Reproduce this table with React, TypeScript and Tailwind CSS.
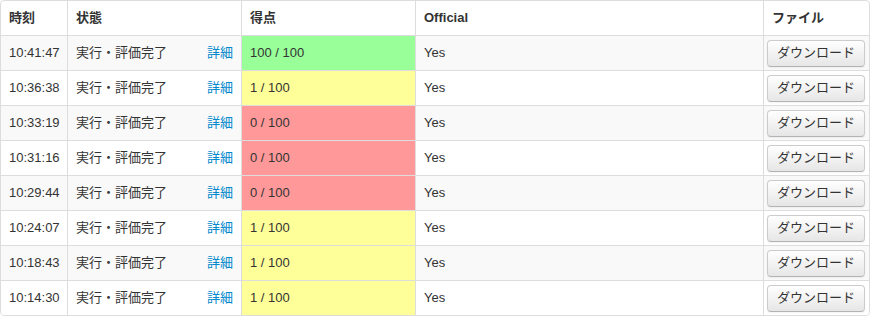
import React from 'react';

type Submission = {
  time: string;
  score: number;
  official: string;
};

const submissions: Submission[] = [
  { time: '10:41:47', score: 100, official: 'Yes' },
  { time: '10:36:38', score: 1, official: 'Yes' },
  { time: '10:33:19', score: 0, official: 'Yes' },
  { time: '10:31:16', score: 0, official: 'Yes' },
  { time: '10:29:44', score: 0, official: 'Yes' },
  { time: '10:24:07', score: 1, official: 'Yes' },
  { time: '10:18:43', score: 1, official: 'Yes' },
  { time: '10:14:30', score: 1, official: 'Yes' },
];

const scoreClass = (score: number) => {
  if (score === 100) return 'bg-[#99ff99]';
  if (score === 0) return 'bg-[#ff9999]';
  return 'bg-[#ffff99]';
};

const font = { fontFamily: '"Liberation Sans", "Noto Sans CJK JP", sans-serif' };

const App: React.FC = () => {
  return (
    <div className="w-[870px] bg-white text-[13px] leading-[18px] text-[#333]" style={font}>
      <div className="border border-[#dddddd] rounded-[4px] overflow-hidden">
        <table className="w-[868px] table-fixed border-separate border-spacing-0">
          <colgroup>
            <col className="w-[66px]" />
            <col className="w-[174px]" />
            <col className="w-[174px]" />
            <col className="w-[348px]" />
            <col className="w-[106px]" />
          </colgroup>
          <thead>
            <tr className="h-[34px]">
              <th className="px-2 text-left font-bold align-middle">時刻</th>
              <th className="px-2 text-left font-bold align-middle border-l border-[#dddddd]">状態</th>
              <th className="px-2 text-left font-bold align-middle border-l border-[#dddddd]">得点</th>
              <th className="px-2 text-left font-bold align-middle border-l border-[#dddddd]">Official</th>
              <th className="px-2 text-left font-bold align-middle border-l border-[#dddddd]">ファイル</th>
            </tr>
          </thead>
          <tbody>
            {submissions.map((s, i) => {
              const stripe = i % 2 === 0 ? 'bg-[#f9f9f9]' : 'bg-white';
              return (
                <tr key={s.time} className="h-[35px]">
                  <td className={`h-[35px] px-2 py-0 align-middle border-t border-[#dddddd] ${stripe}`}>{s.time}</td>
                  <td className={`h-[35px] px-2 py-0 align-middle border-t border-l border-[#dddddd] ${stripe}`}>
                    <div className="flex justify-between">
                      <span>実行・評価完了</span>
                      <a href="#" className="text-[#0088cc]">詳細</a>
                    </div>
                  </td>
                  <td className={`h-[35px] px-2 py-0 align-middle border-t border-l border-[#dddddd] ${scoreClass(s.score)}`}>
                    {s.score} / 100
                  </td>
                  <td className={`h-[35px] px-2 py-0 align-middle border-t border-l border-[#dddddd] ${stripe}`}>{s.official}</td>
                  <td className={`h-[35px] pl-[3px] py-0 align-middle border-t border-l border-[#dddddd] ${stripe}`}>
                    <button className="flex h-[27px] w-[98px] items-center justify-center whitespace-nowrap p-0 rounded-[4px] border border-[#cccccc] border-b-[#b3b3b3] bg-gradient-to-b from-white to-[#e6e6e6] text-[13px] leading-[18px] text-[#333] shadow-[inset_0_1px_0_rgba(255,255,255,0.2),0_1px_2px_rgba(0,0,0,0.05)]">
                      ダウンロード
                    </button>
                  </td>
                </tr>
              );
            })}
          </tbody>
        </table>
      </div>
    </div>
  );
};

export default App;
